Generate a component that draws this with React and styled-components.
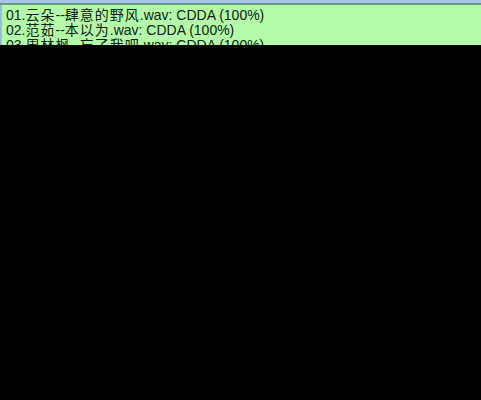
import React from 'react'
import styled, { createGlobalStyle } from 'styled-components'

const tracks = [
  '01.云朵--肆意的野风.wav: CDDA (100%)',
  '02.范茹--本以为.wav: CDDA (100%)',
  '03.周林枫--忘了我吧.wav: CDDA (100%)',
]

const Global = createGlobalStyle`
  html, body { margin: 0; padding: 0; background: #000; }
`

const Screen = styled.div`
  width: 481px;
  height: 400px;
  background: #000;
  overflow: hidden;
`

const Panel = styled.div`
  height: 45px;
  overflow: hidden;
  display: flex;
  flex-direction: column;
`

const TopStrip = styled.div`
  height: 3px;
  background: #a9c3ea;
  border-bottom: 2px solid #6a9884;
  flex: none;
`

const List = styled.div`
  flex: 1;
  background: #b3fca8;
  border-left: 2px solid #9cbbe4;
  padding-top: 3px;
`

const Row = styled.div`
  height: 15px;
  line-height: 15px;
  padding-left: 4px;
  font-family: Tahoma, "Liberation Sans", "Noto Sans CJK SC", sans-serif;
  font-size: 14px;
  color: #102010;
  white-space: nowrap;
`

const Cjk = styled.span`
  letter-spacing: 1px;
`

function splitText(t) {
  return t.split(/([\u4e00-\u9fff]+)/).map((part, i) =>
    /[\u4e00-\u9fff]/.test(part) ? <Cjk key={i}>{part}</Cjk> : part
  )
}

export default function App() {
  return (
    <Screen>
      <Global />
      <Panel>
        <TopStrip />
        <List>
          {tracks.map((t) => (
            <Row key={t}>{splitText(t)}</Row>
          ))}
        </List>
      </Panel>
    </Screen>
  )
}
